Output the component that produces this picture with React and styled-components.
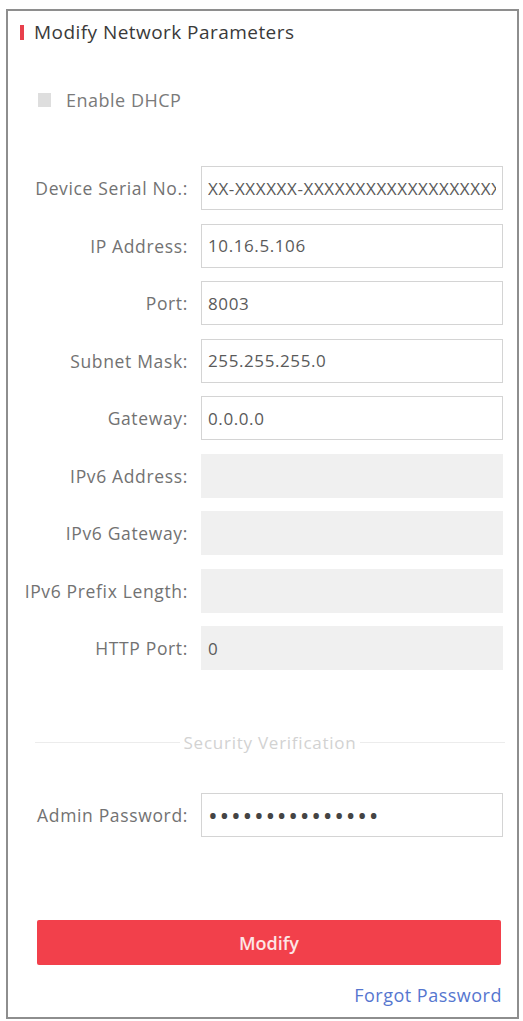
import React from 'react';
import styled, { createGlobalStyle } from 'styled-components';

const GlobalStyle = createGlobalStyle`
  body {
    margin: 0;
    background: #fff;
    font-family: "Open Sans", "Noto Sans", sans-serif;
  }
`;

const Panel = styled.div`
  box-sizing: border-box;
  margin: 9px 0 0 6px;
  width: 513px;
  height: 1010px;
  border: 2px solid #8e8e8e;
  display: flex;
  flex-direction: column;
`;

const Title = styled.h2`
  margin: 11px 0 0 12px;
  display: flex;
  align-items: center;
  gap: 10px;
  height: 20px;
  font-size: 19px;
  font-weight: 400;
  color: #3a3a3a;
  letter-spacing: 0.45px;
  white-space: nowrap;
`;

const Marker = styled.span`
  width: 4px;
  height: 15px;
  background: #e8404c;
`;

const CheckRow = styled.label`
  margin: 48px 0 0 30px;
  display: flex;
  align-items: center;
  gap: 15px;
  height: 20px;
  font-size: 18px;
  letter-spacing: 0.5px;
  color: #7a7a7a;
`;

const Box = styled.span`
  width: 13px;
  height: 14px;
  background: #dedede;
`;

const Fields = styled.div`
  margin-top: 56px;
  display: grid;
  grid-template-columns: 180px 302px;
  column-gap: 13px;
  row-gap: 13.5px;
`;

const Label = styled.span`
  align-self: center;
  text-align: right;
  font-size: 17.5px;
  color: #727272;
  white-space: nowrap;
  letter-spacing: 0.65px;
`;

const Input = styled.input`
  box-sizing: border-box;
  width: 100%;
  height: 44px;
  padding: 0 6px;
  margin: 0;
  border: 1px solid ${p => (p.disabled ? '#f0f0f0' : '#d4d4d4')};
  background: ${p => (p.disabled ? '#f0f0f0' : '#fff')};
  font-family: "Open Sans", "Noto Sans", sans-serif;
  font-size: ${p => (p.$dots ? '26px' : '17px')};
  letter-spacing: ${p => (p.$dots ? '1.7px' : '0.6px')};
  color: ${p => (p.$dots ? '#444' : '#5a5a5a')};
  outline: none;
  text-overflow: clip;
`;

const Divider = styled.div`
  margin: 62px 12px 0 27px;
  height: 20px;
  display: flex;
  align-items: center;
  gap: 4px;
  font-size: 17px;
  letter-spacing: 0.75px;
  color: #d2d2d2;
  white-space: nowrap;

  &::before,
  &::after {
    content: '';
    flex: 1;
    border-top: 1px solid #ececec;
  }
`;

const AdminRow = styled(Fields)`
  margin-top: 41px;
`;

const Button = styled.button`
  margin: 83px 0 0 29px;
  width: 464px;
  height: 45px;
  border: none;
  border-radius: 2px;
  background: #f2404b;
  color: #fde5e6;
  font-family: "Open Sans", "Noto Sans", sans-serif;
  font-size: 18px;
  font-weight: 600;
  cursor: pointer;
`;

const Forgot = styled.a`
  align-self: flex-end;
  margin: 20px 15px 0 0;
  line-height: 20px;
  font-size: 18px;
  letter-spacing: 0.5px;
  color: #5676cf;
  text-decoration: none;
`;

const fields = [
  { label: 'Device Serial No.:', value: 'XX-XXXXXX-XXXXXXXXXXXXXXXXXXXX' },
  { label: 'IP Address:', value: '10.16.5.106' },
  { label: 'Port:', value: '8003' },
  { label: 'Subnet Mask:', value: '255.255.255.0' },
  { label: 'Gateway:', value: '0.0.0.0' },
  { label: 'IPv6 Address:', value: '', disabled: true },
  { label: 'IPv6 Gateway:', value: '', disabled: true },
  { label: 'IPv6 Prefix Length:', value: '', disabled: true },
  { label: 'HTTP Port:', value: '0', disabled: true },
];

const App = () => {
  return (
    <>
      <GlobalStyle />
      <Panel>
        <Title>
          <Marker />
          Modify Network Parameters
        </Title>

        <CheckRow>
          <Box />
          Enable DHCP
        </CheckRow>

        <Fields>
          {fields.map(f => (
            <React.Fragment key={f.label}>
              <Label>{f.label}</Label>
              <Input readOnly value={f.value} disabled={f.disabled} />
            </React.Fragment>
          ))}
        </Fields>

        <Divider>Security Verification</Divider>

        <AdminRow>
          <Label>Admin Password:</Label>
          <Input readOnly $dots value={'•'.repeat(15)} />
        </AdminRow>

        <Button type="button">Modify</Button>
        <Forgot href="#">Forgot Password</Forgot>
      </Panel>
    </>
  );
};

export default App;
